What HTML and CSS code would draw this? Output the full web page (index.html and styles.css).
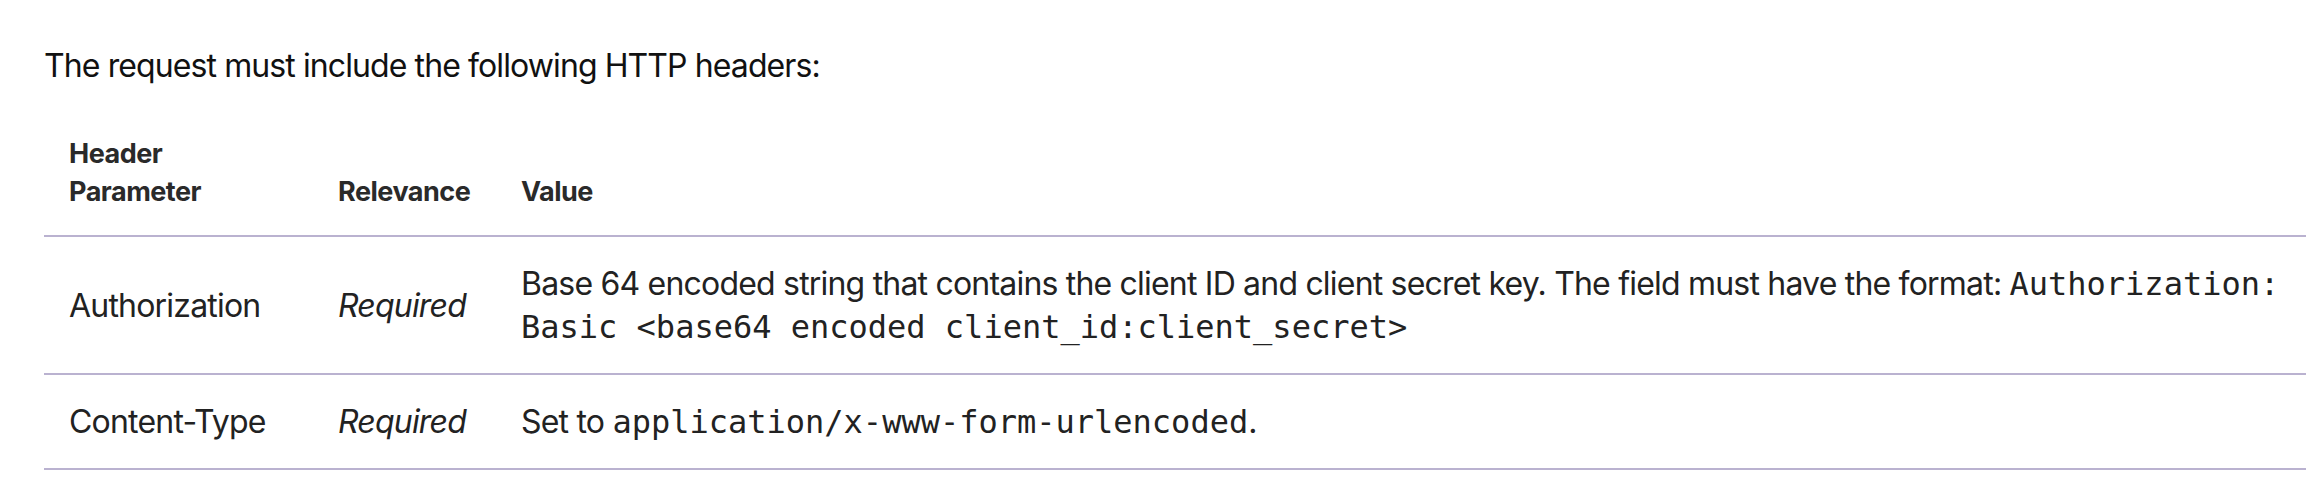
FILE: index.html
```html
<!DOCTYPE html>
<html lang="en">
<head>
<meta charset="utf-8">
<title>HTTP headers</title>
<link rel="stylesheet" href="styles.css">
</head>
<body>
<main class="page">
  <p class="intro">The request must include the following HTTP headers:</p>
  <table class="headers">
    <colgroup>
      <col class="col-param">
      <col class="col-rel">
      <col class="col-val">
    </colgroup>
    <thead>
      <tr>
        <th>Header<br>Parameter</th>
        <th>Relevance</th>
        <th>Value</th>
      </tr>
    </thead>
    <tbody>
      <tr>
        <td>Authorization</td>
        <td><em>Required</em></td>
        <td>Base 64 encoded string that contains the client ID and client secret key. The field must have the format: <code>Authorization: Basic &lt;base64 encoded client_id:client_secret&gt;</code></td>
      </tr>
      <tr>
        <td>Content-Type</td>
        <td><em>Required</em></td>
        <td>Set to <code>application/x-www-form-urlencoded</code>.</td>
      </tr>
    </tbody>
  </table>
</main>
</body>
</html>
```
FILE: styles.css
```css
html, body {
  margin: 0;
  padding: 0;
  background: #ffffff;
}

body {
  font-family: "Inter", "Liberation Sans", sans-serif;
  color: #1c1c1c;
}

.page {
  padding-left: 44px;
}

.intro {
  margin: 44px 0 0;
  font-size: 32px;
  line-height: 43px;
  letter-spacing: -0.9px;
  color: #111111;
}

.headers {
  margin-top: 23px;
  width: 100%;
  border-collapse: collapse;
  table-layout: fixed;
}

.col-param { width: 269px; }
.col-rel { width: 183px; }

.headers th {
  text-align: left;
  vertical-align: bottom;
  font-size: 27px;
  font-weight: 700;
  line-height: 38px;
  letter-spacing: -0.5px;
  color: #2a2a2a;
  padding: 25px 25px 24px;
  border-bottom: 2px solid #bab2d0;
}

.headers td {
  vertical-align: middle;
  font-size: 32px;
  line-height: 43px;
  letter-spacing: -0.8px;
  color: #222222;
  padding: 25px 25px;
  border-bottom: 2px solid #bab2d0;
}

.headers em {
  font-style: italic;
}

.headers code {
  font-family: "DejaVu Sans Mono", "Liberation Mono", monospace;
  font-size: 32px;
  line-height: 1;
  letter-spacing: 0;
  color: #222222;
}
```
